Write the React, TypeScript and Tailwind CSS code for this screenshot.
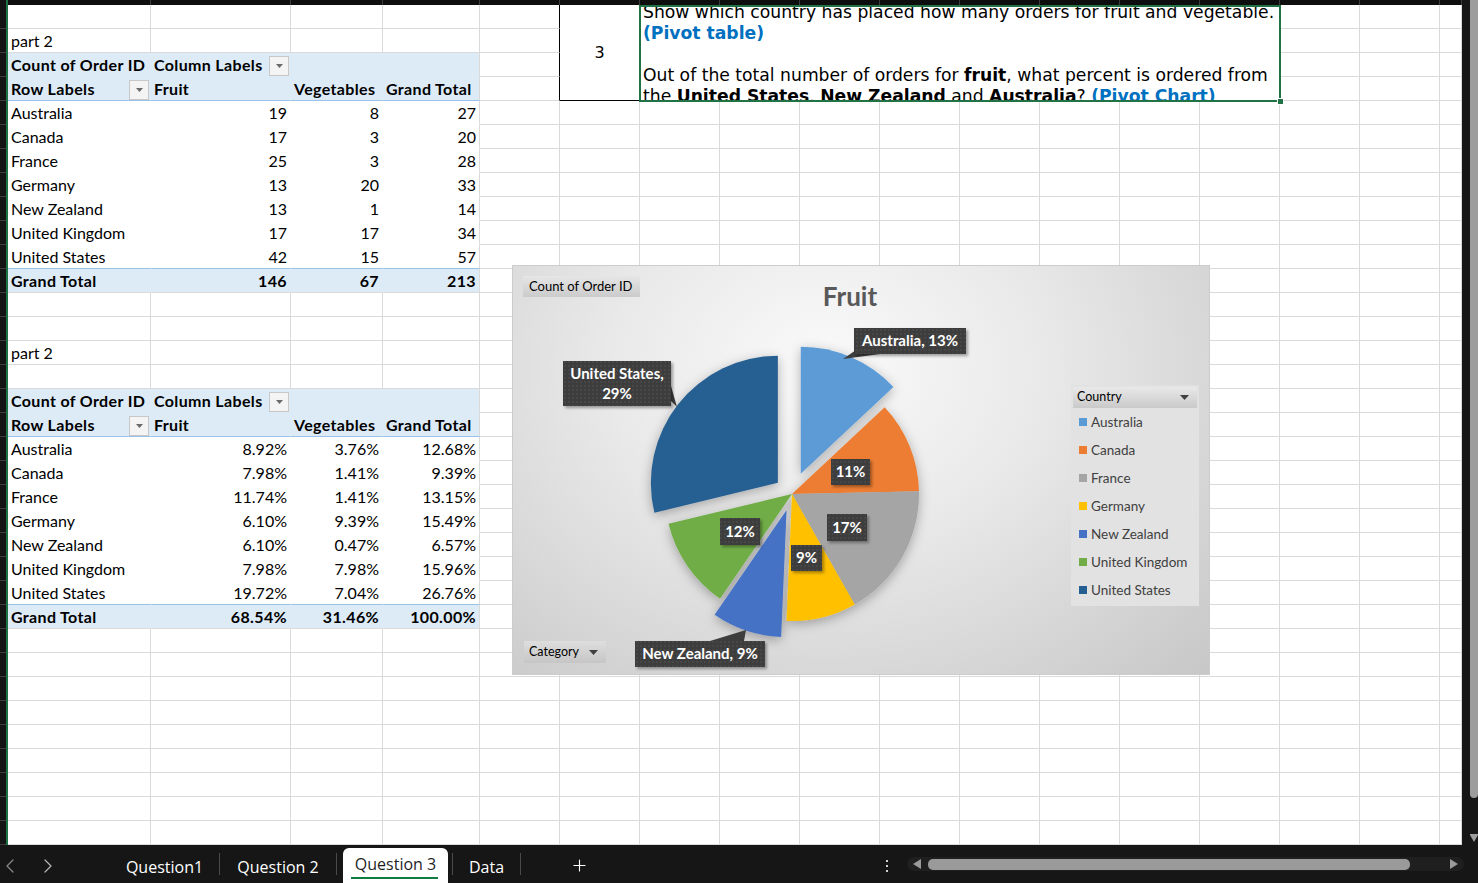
import React from "react";
import { ChevronLeft, ChevronRight, Plus } from "lucide-react";

const fruitRows = [
  ["Australia", "19", "8", "27"],
  ["Canada", "17", "3", "20"],
  ["France", "25", "3", "28"],
  ["Germany", "13", "20", "33"],
  ["New Zealand", "13", "1", "14"],
  ["United Kingdom", "17", "17", "34"],
  ["United States", "42", "15", "57"],
];
const pctRows = [
  ["Australia", "8.92%", "3.76%", "12.68%"],
  ["Canada", "7.98%", "1.41%", "9.39%"],
  ["France", "11.74%", "1.41%", "13.15%"],
  ["Germany", "6.10%", "9.39%", "15.49%"],
  ["New Zealand", "6.10%", "0.47%", "6.57%"],
  ["United Kingdom", "7.98%", "7.98%", "15.96%"],
  ["United States", "19.72%", "7.04%", "26.76%"],
];

const pivots = [
  { h: 2, rows: fruitRows, total: ["Grand Total", "146", "67", "213"] },
  { h: 16, rows: pctRows, total: ["Grand Total", "68.54%", "31.46%", "100.00%"] },
];
const labels: Record<number, string> = { 1: "part 2", 14: "part 2" };

type Kind = "h1" | "h2" | "d" | "dl" | "t";
const kindStyle: Record<Kind, { bg: string; bb: string; br: string }> = {
  h1: { bg: "bg-[#ddebf7]", bb: "border-b-[#ddebf7]", br: "border-r-[#ddebf7]" },
  h2: { bg: "bg-[#ddebf7]", bb: "border-b-[#9bc2e6]", br: "border-r-[#ddebf7]" },
  d: { bg: "bg-white", bb: "border-b-white", br: "border-r-white" },
  dl: { bg: "bg-white", bb: "border-b-[#9bc2e6]", br: "border-r-white" },
  t: { bg: "bg-[#ddebf7]", bb: "border-b-[#dadada]", br: "border-r-[#ddebf7]" },
};

const BASE =
  "flex items-end overflow-hidden whitespace-nowrap border-r border-b pb-[1px] text-[16px] leading-[20px] text-black";

function Dropdown() {
  return (
    <span className="ml-auto mb-[-1px] flex h-[20px] w-[20px] shrink-0 items-center justify-center border border-[#c8c8c8] bg-[#f4f4f4]">
      <svg width="7" height="4" viewBox="0 0 7 4">
        <path d="M0 0h7L3.5 4z" fill="#6a6a6a" />
      </svg>
    </span>
  );
}

function renderCell(r: number, c: number) {
  const key = `${r}-${c}`;
  for (const p of pivots) {
    const n = p.rows.length;
    if (c <= 3 && r >= p.h && r <= p.h + 2 + n) {
      const i = r - p.h;
      let kind: Kind;
      if (i === 0) kind = "h1";
      else if (i === 1) kind = "h2";
      else if (i === n + 2) kind = "t";
      else if (i === n + 1) kind = "dl";
      else kind = "d";
      const st = kindStyle[kind];
      const br = c === 3 ? "border-r-[#dadada]" : st.br;
      const bold = kind === "h1" || kind === "h2" || kind === "t" ? "font-bold tracking-[0.35px]" : "";
      let content: React.ReactNode = null;
      let pad = "pl-[3px] pr-[3px]";
      if (kind === "h1") {
        if (c === 0) content = "Count of Order ID";
        if (c === 1) {
          content = (
            <>
              <span>Column Labels</span>
              <Dropdown />
            </>
          );
          pad = "pl-[3px] pr-[1px]";
        }
      } else if (kind === "h2") {
        if (c === 0) {
          content = (
            <>
              <span>Row Labels</span>
              <Dropdown />
            </>
          );
          pad = "pl-[3px] pr-[1px]";
        }
        if (c === 1) content = "Fruit";
        if (c === 2) content = "Vegetables";
        if (c === 3) content = "Grand Total";
      } else {
        const vals = kind === "t" ? p.total : p.rows[i - 2];
        content = vals[c];
        if (c > 0) pad = "pl-[3px] pr-[3px] justify-end";
      }
      return (
        <div key={key} className={`${BASE} ${st.bg} ${st.bb} ${br} ${bold} ${pad}`}>
          {content}
        </div>
      );
    }
  }
  if (c === 4 && r < 4) {
    return <div key={key} className={`${BASE} bg-white border-b-[#dadada] border-r-black`} />;
  }
  return (
    <div key={key} className={`${BASE} bg-white border-[#dadada] pl-[3px]`}>
      {c === 0 && labels[r] ? labels[r] : null}
    </div>
  );
}

function Sheet() {
  const cells: React.ReactNode[] = [];
  for (let r = 0; r < 35; r++) {
    for (let c = 0; c < 17; c++) {
      if (r < 4 && c >= 5 && c <= 13) continue;
      cells.push(renderCell(r, c));
    }
  }
  return (
    <div className="grid grid-cols-[143px_140px_92px_97px_repeat(12,80px)_22px] auto-rows-[24px] bg-white font-['Lato',sans-serif]">
      <div className="col-start-6 row-start-1 row-span-4 flex items-center justify-center border-b border-r border-b-black border-r-[#217346] bg-white font-['DejaVu_Sans',sans-serif] text-[16px] text-black">
        3
      </div>
      <div className="relative col-start-7 col-span-8 row-start-1 row-span-4 bg-white">
        <div className="h-full overflow-hidden">
          <div className="mt-[-3px] pl-[3px] whitespace-nowrap font-['DejaVu_Sans',sans-serif] text-[17.2px] leading-[21px] text-black">
            <div>Show which country has placed how many orders for fruit and vegetable.</div>
            <div className="font-bold text-[#0070c0]">(Pivot table)</div>
            <div>&nbsp;</div>
            <div>
              Out of the total number of orders for <b>fruit</b>, what percent is ordered from
            </div>
            <div>
              the <b>United States</b>, <b>New Zealand</b> and <b>Australia</b>?{" "}
              <span className="font-bold text-[#0070c0]">(Pivot Chart)</span>
            </div>
          </div>
        </div>
        <div className="pointer-events-none absolute -left-[1px] top-0 -right-[1px] -bottom-[1px] border-2 border-[#217346]" />
        <div className="absolute -right-[4px] -bottom-[4px] h-[7px] w-[7px] border border-white bg-[#217346]" />
      </div>
      {cells}
    </div>
  );
}

function TopBar() {
  const cols = [143, 140, 92, 97, 80, 80, 80, 80, 80, 80, 80, 80, 80, 80, 80, 80, 22];
  return (
    <div className="grid h-[5px] grid-cols-[143px_140px_92px_97px_repeat(12,80px)_22px] bg-[#0e0e0e]">
      {cols.map((_, i) => (
        <div key={i} className="border-r border-[#3c3c3c]" />
      ))}
    </div>
  );
}

function LeftStrip() {
  return (
    <div className="flex w-[8px] flex-col border-r-2 border-[#1e7145] bg-[#141414]">
      <div className="h-[5px] shrink-0" />
      {Array.from({ length: 35 }).map((_, i) => (
        <div key={i} className="h-[24px] shrink-0 border-b border-[#3c3c3c]" />
      ))}
    </div>
  );
}

function RightScroll() {
  return (
    <div className="flex w-[16px] bg-[#161616]">
      <div className="w-[8px]" />
      <div className="flex w-[8px] flex-col">
        <div className="h-[798px] rounded-b-[4px] bg-[#9d9d9d]" />
        <div className="flex-1" />
        <svg width="8" height="9" viewBox="0 0 8 9" className="mb-[2px]">
          <path d="M0 0h8v1L4 8 0 1z" fill="#9d9d9d" />
        </svg>
      </div>
    </div>
  );
}

function TabBar() {
  return (
    <div className="flex h-[38px] items-stretch font-['Open_Sans',sans-serif] text-[16px] text-white">
      <div className="flex w-[110px] items-center pt-[3px]">
        <ChevronLeft size={24} strokeWidth={1.2} className="ml-[-2px] text-[#8a8a8a]" />
        <ChevronRight size={24} strokeWidth={1.2} className="ml-[14px] text-[#b5b5b5]" />
      </div>
      <div className="flex w-[109px] items-center justify-center pt-[5px]">Question1</div>
      <div className="my-[8px] w-px bg-[#4a4a4a]" />
      <div className="flex w-[116px] items-center justify-center pt-[5px]">Question 2</div>
      <div className="my-[8px] w-px bg-[#4a4a4a]" />
      <div className="w-[6px]" />
      <div className="relative mt-[3px] flex w-[105px] items-center justify-center rounded-t-[6px] bg-white pb-[3px] text-[#1f1f1f]">
        Question 3
        <div className="absolute bottom-[4px] left-[8px] right-[10px] h-[2px] bg-[#107c41]" />
      </div>
      <div className="w-[4px]" />
      <div className="my-[8px] w-px bg-[#4a4a4a]" />
      <div className="flex w-[67px] items-center justify-center pt-[5px]">Data</div>
      <div className="my-[8px] w-px bg-[#4a4a4a]" />
      <div className="flex w-[120px] items-center pt-[3px]">
        <Plus size={19} strokeWidth={1.4} className="ml-[49px]" />
      </div>
      <div className="flex-1" />
      <div className="flex w-[20px] flex-col items-center justify-center gap-[3px] pt-[4px]">
        <div className="h-[2px] w-[2px] bg-[#d0d0d0]" />
        <div className="h-[2px] w-[2px] bg-[#d0d0d0]" />
        <div className="h-[2px] w-[2px] bg-[#d0d0d0]" />
      </div>
      <div className="w-[10px]" />
      <div className="my-[12px] flex w-[557px] items-center rounded-[9px] bg-[#1f1f1f]">
        <svg width="8" height="10" viewBox="0 0 8 10" className="ml-[6px]">
          <path d="M8 0v10L0 5z" fill="#9a9a9a" />
        </svg>
        <div className="ml-[7px] h-[11px] w-[482px] rounded-[5px] bg-[#9a9a9a]" />
        <div className="flex-1" />
        <svg width="8" height="10" viewBox="0 0 8 10" className="mr-[6px]">
          <path d="M0 0v10l8-5z" fill="#9a9a9a" />
        </svg>
      </div>
      <div className="w-[14px]" />
    </div>
  );
}

const slices = [
  { name: "Australia", v: 19, color: "#5b9bd5", ex: 22 },
  { name: "Canada", v: 17, color: "#ed7d31", ex: 0 },
  { name: "France", v: 25, color: "#a5a5a5", ex: 0 },
  { name: "Germany", v: 13, color: "#ffc000", ex: 0 },
  { name: "New Zealand", v: 13, color: "#4472c4", ex: 17 },
  { name: "United Kingdom", v: 17, color: "#70ad47", ex: 0 },
  { name: "United States", v: 42, color: "#255e91", ex: 18 },
];

function slicePath(cx: number, cy: number, r: number, a0: number, a1: number) {
  const pt = (a: number) => {
    const rad = (a * Math.PI) / 180;
    return [cx + r * Math.sin(rad), cy - r * Math.cos(rad)];
  };
  const [x0, y0] = pt(a0);
  const [x1, y1] = pt(a1);
  const large = a1 - a0 > 180 ? 1 : 0;
  return `M${cx} ${cy} L${x0} ${y0} A${r} ${r} 0 ${large} 1 ${x1} ${y1} Z`;
}

function Label({ x, y, w, h, lines }: { x: number; y: number; w: number; h: number; lines: string[] }) {
  return (
    <g>
      <rect x={x} y={y} width={w} height={h} fill="url(#dots)" filter="url(#lblShadow)" />
      {lines.map((l, i) => (
        <text
          key={i}
          x={x + w / 2}
          y={lines.length === 1 ? y + h / 2 + 5 : y + 18 + i * 20}
          textAnchor="middle"
          fontSize="15"
          fontWeight="700"
          fill="#ffffff"
          fontFamily="Lato, sans-serif"
        >
          {l}
        </text>
      ))}
    </g>
  );
}

function Chart() {
  const CX = 280;
  const CY = 229;
  const R = 127;
  const total = slices.reduce((a, s) => a + s.v, 0);
  let acc = 0;
  const geo = slices.map((s) => {
    const a0 = (acc / total) * 360;
    acc += s.v;
    const a1 = (acc / total) * 360;
    const mid = (((a0 + a1) / 2) * Math.PI) / 180;
    const dx = s.ex * Math.sin(mid);
    const dy = -s.ex * Math.cos(mid);
    return { ...s, d: slicePath(CX + dx, CY + dy, R, a0, a1) };
  });
  return (
    <div className="absolute left-[512px] top-[265px] h-[410px] w-[698px] border border-[#cccccc] bg-[radial-gradient(ellipse_at_45%_25%,#fafafa_0%,#e9e9e9_40%,#c7c7c7_100%)] font-['Lato',sans-serif]">
      <svg className="absolute -left-[1px] -top-[1px]" width="698" height="410" viewBox="0 0 698 410">
        <defs>
          <pattern id="dots" width="4" height="4" patternUnits="userSpaceOnUse">
            <rect width="4" height="4" fill="#3d3d3d" />
            <circle cx="1" cy="1" r="0.7" fill="#575757" />
          </pattern>
          <filter id="pieShadow" x="-20%" y="-20%" width="140%" height="140%">
            <feDropShadow dx="0" dy="3" stdDeviation="6" floodColor="#000" floodOpacity="0.3" />
          </filter>
          <filter id="lblShadow" x="-20%" y="-30%" width="140%" height="170%">
            <feDropShadow dx="2" dy="2" stdDeviation="1.5" floodColor="#000" floodOpacity="0.35" />
          </filter>
        </defs>
        <text x="338" y="41" textAnchor="middle" fontSize="26" fontWeight="700" fill="#595959" fontFamily="Lato, sans-serif">
          Fruit
        </text>
        <g filter="url(#pieShadow)">
          {geo.map((g) => (
            <path key={g.name} d={g.d} fill={g.color} />
          ))}
        </g>
        <polygon points="344,85 368,89 331,94" fill="#3d3d3d" />
        <polygon points="159,121 159,136 165,142" fill="#3d3d3d" />
        <polygon points="198,376 232,376 234,365" fill="#3d3d3d" />
        <Label x={342} y={63} w={112} h={26} lines={["Australia, 13%"]} />
        <Label x={319} y={194} w={39} h={26} lines={["11%"]} />
        <Label x={315} y={249} w={40} h={27} lines={["17%"]} />
        <Label x={279} y={280} w={31} h={26} lines={["9%"]} />
        <Label x={208} y={253} w={40} h={27} lines={["12%"]} />
        <Label x={51} y={96} w={108} h={45} lines={["United States,", "29%"]} />
        <Label x={123} y={376} w={130} h={26} lines={["New Zealand, 9%"]} />
      </svg>
      <div className="absolute left-[10px] top-[10px] flex h-[21px] w-[117px] items-center bg-[linear-gradient(#e6e6e6,#cbcbcb)] pl-[6px] text-[13px] text-black">
        Count of Order ID
      </div>
      <div className="absolute left-[11px] top-[375px] flex h-[22px] w-[82px] items-center bg-[linear-gradient(#dedede,#c6c6c6)] pl-[5px] text-[12.5px] text-black">
        Category
        <svg width="9" height="5" viewBox="0 0 9 5" className="ml-[10px]">
          <path d="M0 0h9L4.5 5z" fill="#404040" />
        </svg>
      </div>
      <div className="absolute left-[558px] top-[119px] h-[221px] w-[128px] bg-[#e2e2e2] p-[2px]">
        <div className="flex h-[21px] items-center justify-between bg-[linear-gradient(#e9e9e9,#c9c9c9)] pl-[4px] pr-[8px] text-[12.5px] text-black">
          Country
          <svg width="9" height="5" viewBox="0 0 9 5">
            <path d="M0 0h9L4.5 5z" fill="#404040" />
          </svg>
        </div>
        <div className="flex flex-col">
          {slices.map((s) => (
            <div key={s.name} className="flex h-[28px] items-center pl-[6px] text-[13.5px] text-[#404040]">
              <span className="h-[8px] w-[8px]" style={{ backgroundColor: s.color }} />
              <span className="ml-[4px]">{s.name}</span>
            </div>
          ))}
        </div>
      </div>
    </div>
  );
}

export default function App() {
  return (
    <div className="relative h-[883px] w-[1478px] overflow-hidden bg-[#161616]">
      <div className="flex h-[845px]">
        <LeftStrip />
        <div className="flex w-[1454px] flex-col">
          <TopBar />
          <Sheet />
        </div>
        <RightScroll />
      </div>
      <TabBar />
      <Chart />
    </div>
  );
}
